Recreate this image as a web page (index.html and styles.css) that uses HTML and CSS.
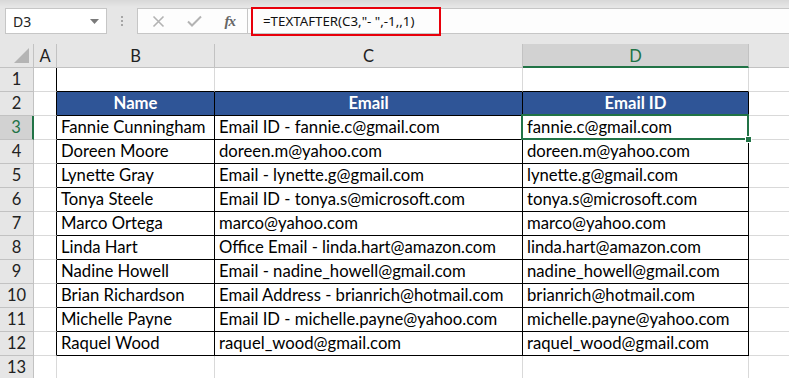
FILE: index.html
```html
<!DOCTYPE html>
<html lang="en">

<head>
    <meta charset="UTF-8">
    <meta name="viewport" content="width=device-width, initial-scale=1.0">
    <title>TEXTAFTER</title>
    <link rel="stylesheet" href="styles.css">
</head>

<body>
    <div class="toolbar">
        <div class="namebox">
            <span>D3</span>
            <svg class="drop" width="9" height="5" viewBox="0 0 9 5"><path d="M0 0h9L4.5 5z" fill="#7a7a7a" /></svg>
        </div>
        <div class="grip"><i></i><i></i><i></i></div>
        <div class="fxbox">
            <svg width="13" height="13" viewBox="0 0 13 13"><path d="M1.5 1.5l10 10M11.5 1.5l-10 10" stroke="#b3b3b3" stroke-width="1.6" fill="none" /></svg>
            <svg width="15" height="12" viewBox="0 0 15 12"><path d="M1 6.5l4 4 9-9" stroke="#b3b3b3" stroke-width="2" fill="none" /></svg>
            <span class="fx">fx</span>
        </div>
        <div class="formula">
            <span class="mark">=TEXTAFTER(C3,"- ",-1,,1)</span>
        </div>
    </div>

    <div class="sheet" id="sheet">
        <div class="hd corner"><i class="tri"></i></div>
        <div class="hd col">A</div>
        <div class="hd col">B</div>
        <div class="hd col">C</div>
        <div class="hd col sel">D</div>
        <div class="hd col last"></div>
    </div>

    <script>
        const sheet = document.querySelector('#sheet')
        const data = [
            ['Fannie Cunningham', 'Email ID - fannie.c@gmail.com', 'fannie.c@gmail.com'],
            ['Doreen Moore', 'doreen.m@yahoo.com', 'doreen.m@yahoo.com'],
            ['Lynette Gray', 'Email - lynette.g@gmail.com', 'lynette.g@gmail.com'],
            ['Tonya Steele', 'Email ID - tonya.s@microsoft.com', 'tonya.s@microsoft.com'],
            ['Marco Ortega', 'marco@yahoo.com', 'marco@yahoo.com'],
            ['Linda Hart', 'Office Email - linda.hart@amazon.com', 'linda.hart@amazon.com'],
            ['Nadine Howell', 'Email - nadine_howell@gmail.com', 'nadine_howell@gmail.com'],
            ['Brian Richardson', 'Email Address - brianrich@hotmail.com', 'brianrich@hotmail.com'],
            ['Michelle Payne', 'Email ID - michelle.payne@yahoo.com', 'michelle.payne@yahoo.com'],
            ['Raquel Wood', 'raquel_wood@gmail.com', 'raquel_wood@gmail.com']
        ]

        function cell(cls, text) {
            const d = document.createElement('div')
            d.className = cls
            if (text) d.textContent = text
            sheet.appendChild(d)
            return d
        }

        //第1行：空行，下面是表格
        cell('hd row', '1')
        cell('c edge')
        cell('c top'); cell('c top'); cell('c top')
        cell('c last')

        //第2行：表头
        cell('hd row', '2')
        cell('c edge')
        cell('t th', 'Name'); cell('t th', 'Email'); cell('t th', 'Email ID')
        cell('c last')

        //3-12行：数据
        data.forEach(function (r, i) {
            const n = i + 3
            cell(n === 3 ? 'hd row sel' : 'hd row', String(n))
            cell('c edge')
            cell('t', r[0]); cell('t', r[1])
            const d = cell('t', r[2])
            if (n === 3) {
                d.classList.add('active')
                d.innerHTML += '<span class="box"></span><span class="handle"></span>'
            }
            cell('c last')
        })

        //第13行
        cell('hd row', '13')
        cell('c'); cell('c'); cell('c'); cell('c')
        cell('c last')
    </script>
</body>

</html>
```

FILE: styles.css
```css
* {
    padding: 0;
    margin: 0;
    box-sizing: border-box;
}

body {
    width: 789px;
    height: 378px;
    overflow: hidden;
    background: #fff;
    font-family: Lato, "Liberation Sans", sans-serif;
}

/* 编辑栏 */
.toolbar {
    height: 44px;
    display: flex;
    align-items: flex-start;
    padding-top: 8px;
    background: linear-gradient(#d8d8d8, #e6e6e6 7px);
    font-family: "Noto Sans", "Open Sans", sans-serif;
}

.namebox {
    width: 102px;
    height: 26px;
    margin-left: 5px;
    background: #fff;
    border: 1px solid #c6c6c6;
    display: flex;
    align-items: center;
    justify-content: space-between;
    padding: 0 7px 0 7px;
    font-size: 14px;
    color: #222;
}

.namebox .drop {
    margin-top: 1px;
}

.grip {
    width: 30px;
    height: 26px;
    display: flex;
    flex-direction: column;
    align-items: center;
    justify-content: center;
    gap: 2px;
}

.grip i {
    width: 2px;
    height: 2px;
    background: #a6a6a6;
}

.fxbox {
    width: 111px;
    height: 26px;
    background: #fdfdfd;
    border: 1px solid #c6c6c6;
    display: flex;
    align-items: center;
    justify-content: space-between;
    padding: 0 12px 0 14px;
}

.fxbox .fx {
    font-family: "Liberation Serif", serif;
    font-style: italic;
    font-weight: bold;
    font-size: 15px;
    color: #666;
    letter-spacing: -1px;
}

.formula {
    flex: 1;
    height: 26px;
    background: #fdfdfd;
    border-top: 1px solid #c6c6c6;
    border-bottom: 1px solid #c6c6c6;
    display: flex;
    align-items: center;
    padding-left: 3px;
}

.formula .mark {
    height: 29px;
    width: 190px;
    border: 2px solid #e8000b;
    display: flex;
    align-items: center;
    padding-left: 10px;
    font-size: 13.3px;
    color: #111;
    white-space: nowrap;
}

/* 表格 */
.sheet {
    display: grid;
    grid-template-columns: 34px 23px 158px 308px 226px 1fr;
    grid-auto-rows: 24px;
    font-size: 16.7px;
    line-height: 23px;
    color: #000;
}

.hd {
    background: #e6e6e6;
    color: #222;
    text-align: center;
    border-right: 1px solid #c2c2c2;
    border-bottom: 1px solid #c2c2c2;
    font-size: 16.5px;
}

.hd.col {
    line-height: 24px;
}

.hd.last {
    border-right: none;
}

.hd.sel {
    background: #d2d2d2;
    color: #217346;
}

.hd.col.sel {
    border-bottom: 2px solid #217346;
}

.hd.row.sel {
    border-right: 2px solid #217346;
}

.corner {
    position: relative;
}

.corner .tri {
    position: absolute;
    right: 4px;
    bottom: 4px;
    width: 0;
    height: 0;
    border-left: 15px solid transparent;
    border-bottom: 15px solid #b4b4b4;
}

.c {
    border-right: 1px solid #d9d9d9;
    border-bottom: 1px solid #d9d9d9;
}

.c.edge {
    border-right-color: #000;
}

.c.top {
    border-bottom-color: #000;
}

.c.last {
    border-right: none;
}

.t {
    border-right: 1px solid #000;
    border-bottom: 1px solid #000;
    padding-left: 4px;
    white-space: nowrap;
}

.t.th {
    background: #2f5597;
    color: #fff;
    font-weight: bold;
    text-align: center;
    padding-left: 0;
}

.t.active {
    position: relative;
}

.t.active .box {
    position: absolute;
    left: -2px;
    top: -2px;
    right: -1px;
    bottom: -1px;
    border: 2px solid #217346;
}

.t.active .handle {
    position: absolute;
    right: -4px;
    bottom: -4px;
    width: 7px;
    height: 7px;
    background: #217346;
    border: 1px solid #fff;
}
```
